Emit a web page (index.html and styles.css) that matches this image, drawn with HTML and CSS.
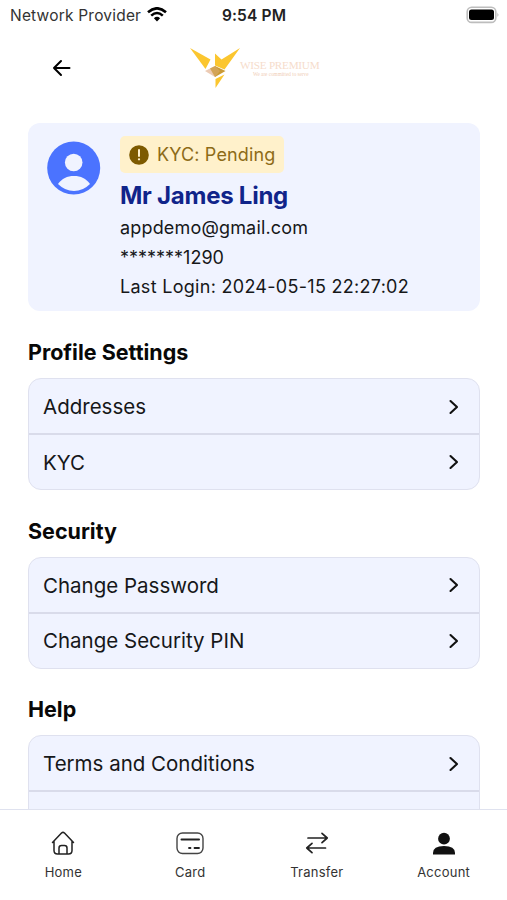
FILE: index.html
```html
<!DOCTYPE html>
<html lang="en">
<head>
<meta charset="utf-8">
<title>Account</title>
<link rel="stylesheet" href="styles.css">
</head>
<body>
<div class="status">
  <div class="carrier"><span class="carrier-name">Network Provider</span>
    <svg width="20" height="15" viewBox="0 0 20 15" fill="none" stroke="#000" stroke-width="2.600"><path d="M1 5.200Q10-2.600 19 5.200M4.200 8.600Q10 3.400 15.800 8.600"/><path d="M6.900 11.200Q10 8.400 13.100 11.200L10 14.400z" fill="#000" stroke="none"/></svg>
  </div>
  <span class="clock">9:54 PM</span>
  <svg class="battery" width="34" height="18" viewBox="0 0 34 18"><rect x="1.200" y="1.200" width="28.600" height="15.200" rx="4.500" fill="#fff" stroke="#bdbdbd" stroke-width="1.600"/><rect x="3" y="3.600" width="25" height="10.400" rx="2.500"/><path d="M31.500 6.600q1.800 2.200 0 4.400z" fill="#aaa"/></svg>
</div>
<header class="header">
  <svg class="back" width="20" height="18" viewBox="0 0 20 18" fill="none" stroke="#000" stroke-width="2" stroke-linecap="round" stroke-linejoin="round"><path d="M17.500 9H2M9 2 2 9l7 7"/></svg>
  <div class="logo">
    <svg width="52" height="42" viewBox="0 0 52 42"><path d="M0 1 20.500 12.500 15.500 22z" fill="#fbc62f"/><path d="M50 1 34.500 22.500 25 18.500V6.500l6.500 6z" fill="#fbc62f"/><path d="M25.500 32 34.500 27.500 25.500 41z" fill="#fbc62f"/><path d="M15 24 25 19 25 30z" fill="#eccbb4"/><path d="M25 19 35.500 24 25 30z" fill="#c99a36"/><path d="M20 21.500 25 19l5 5-5 6z" fill="#d3a457"/></svg>
    <div class="brand"><span class="brand-name">WISE PREMIUM</span><span class="brand-tag">We are committed to serve</span></div>
  </div>
</header>
<main class="main">
  <section class="profile">
    <svg class="avatar" width="54" height="54" viewBox="0 0 54 54"><circle cx="26.700" cy="27" r="26.500" fill="#4b73ff"/><circle cx="26.700" cy="21.500" r="8.800" fill="#f0f3ff"/><path d="M11 43C15 37.500 20 35 27 35s12 2.500 16 8q-7 7-16 7t-16-7z" fill="#f0f3ff"/></svg>
    <div class="details">
      <div class="badge"><svg width="20" height="20" viewBox="0 0 20 20"><circle cx="10" cy="10" r="9.800" fill="#7d5a00"/><path d="M10 5v6" stroke="#fff1cb" stroke-width="2" stroke-linecap="round"/><circle cx="10" cy="14.300" r="1.150" fill="#fff1cb"/></svg><span class="badge-text">KYC: Pending</span></div>
      <div class="name">Mr James Ling</div>
      <div class="line email">appdemo@gmail.com</div>
      <div class="line">*******1290</div>
      <div class="line login">Last Login: 2024-05-15 22:27:02</div>
    </div>
  </section>
  <section class="group">
    <h2>Profile Settings</h2>
    <div class="list">
      <div class="row"><span>Addresses</span><svg class="chev" viewBox="0 0 10 16"><path d="M1.500 2 8 8l-6.500 6"/></svg></div>
      <div class="row"><span>KYC</span><svg class="chev" viewBox="0 0 10 16"><path d="M1.500 2 8 8l-6.500 6"/></svg></div>
    </div>
  </section>
  <section class="group">
    <h2>Security</h2>
    <div class="list">
      <div class="row"><span>Change Password</span><svg class="chev" viewBox="0 0 10 16"><path d="M1.500 2 8 8l-6.500 6"/></svg></div>
      <div class="row"><span>Change Security PIN</span><svg class="chev" viewBox="0 0 10 16"><path d="M1.500 2 8 8l-6.500 6"/></svg></div>
    </div>
  </section>
  <section class="group">
    <h2>Help</h2>
    <div class="list">
      <div class="row"><span>Terms and Conditions</span><svg class="chev" viewBox="0 0 10 16"><path d="M1.500 2 8 8l-6.500 6"/></svg></div>
      <div class="row"></div>
    </div>
  </section>
</main>
<nav class="tabs">
  <div class="tab"><svg width="28" height="26" viewBox="0 0 28 26" fill="none" stroke="#222" stroke-width="1.500" stroke-linecap="round" stroke-linejoin="round"><path d="M3.500 12.500 12.500 3q1.500-1.300 3 0l9 9.500M5 11v9.500Q5 24 8.500 24h11q3.500 0 3.500-3.500V11M10 24v-6q0-2.500 2.500-2.500h3q2.500 0 2.500 2.500v6"/></svg><span>Home</span></div>
  <div class="tab"><svg width="28" height="26" viewBox="0 0 28 26" fill="none" stroke="#222" stroke-width="1.400" stroke-linecap="round"><rect x="1" y="3" width="26" height="20.500" rx="5.500" stroke="#444"/><path d="M5.500 9.500h17.500" stroke-width="2"/><path d="M13 18h1.500M18.500 18h4.500" stroke-width="1.800"/></svg><span>Card</span></div>
  <div class="tab"><svg width="28" height="26" viewBox="0 0 28 26" fill="none" stroke="#222" stroke-width="1.700" stroke-linecap="round" stroke-linejoin="round"><path d="M5 8h19M19 3.300 24.200 8 19 12.700M22.500 18H4M9 13.300 3.800 18 9 22.700"/></svg><span>Transfer</span></div>
  <div class="tab"><svg width="28" height="26" viewBox="0 0 28 26" fill="#111"><circle cx="14" cy="8.700" r="5.900"/><path d="M3 24.500V23q0-7 11-7t11 7v1.500z"/></svg><span>Account</span></div>
</nav>
</body>
</html>
```

FILE: styles.css
```css
* { box-sizing: border-box; }
body {
  margin: 0;
  width: 507px;
  height: 900px;
  overflow: hidden;
  display: flex;
  flex-direction: column;
  background: #fff;
  color: #161719;
  font-family: Inter, "Liberation Sans", sans-serif;
}
svg { display: block; flex: none; }
span, h2, .name, .line { white-space: nowrap; }
.status {
  flex: none;
  height: 29px;
  display: grid;
  grid-template-columns: 190px 1fr 190px;
  align-items: center;
  padding: 0 7px 0 10px;
}
.carrier { display: flex; align-items: center; gap: 6px; font-size: 15.5px; color: #333; letter-spacing: .2px; }
.carrier-name, .clock { padding-top: 1px; }
.clock { text-align: center; font-size: 15.5px; font-weight: 600; color: #222; letter-spacing: .15px; margin-right: 2px; }
.battery { justify-self: end; }
.header { flex: none; height: 94px; display: flex; padding: 18px 0 0 52px; }
.back { margin-top: 12px; }
.logo { display: flex; margin-left: 118px; }
.brand { padding: 12px 0 0 0; margin-left: -2px; display: flex; flex-direction: column; font-family: "Liberation Serif", serif; color: #f6dccb; }
.brand-name { font-size: 11.2px; line-height: 13px; letter-spacing: -.25px; }
.brand-tag { font-size: 5.2px; line-height: 5px; padding-left: 13px; color: #f0cdb5; }
.main { flex: 1; min-height: 0; overflow: hidden; padding: 0 27px 0 28px; }
.profile { height: 188px; border-radius: 12px; background: #f0f3ff; display: flex; padding: 13px 0 0 19px; }
.avatar { margin-top: 5px; }
.details { margin-left: 19px; }
.badge { width: 164px; height: 37px; border-radius: 5px; background: #fff1cb; color: #8d6b17; display: flex; align-items: center; gap: 8px; padding-left: 9px; font-size: 18px; letter-spacing: .15px; }
.name { height: 40px; line-height: 46px; font-size: 24px; font-weight: 700; color: #10248a; letter-spacing: -.25px; }
.line { height: 29.6px; line-height: 29.6px; font-size: 18px; }
.email { letter-spacing: .17px; }
.login { letter-spacing: .29px; }
.group { height: 178.7px; padding-top: 26px; }
h2 { margin: 0 0 11px; height: 30px; line-height: 30px; font-size: 21.5px; font-weight: 650; color: #080808; letter-spacing: 0; }
.list { height: 112px; border: 1.5px solid #dfe1ef; border-radius: 13px; background: #f0f3ff; overflow: hidden; }
.row { height: 54px; display: flex; align-items: center; justify-content: space-between; padding: 0 20px 0 14px; font-size: 20.5px; }
.row:first-child { height: 56px; border-bottom: 2px solid #d9dbea; padding-top: 1px; }
.chev { width: 10px; height: 16px; fill: none; stroke: #111; stroke-width: 2.1; stroke-linecap: round; stroke-linejoin: round; }
.tabs { flex: none; height: 91px; border-top: 1.5px solid #dfe2ef; background: #fff; display: grid; grid-template-columns: repeat(4, 1fr); }
.tab { display: flex; flex-direction: column; align-items: center; padding: 20px 0 0; font-size: 13px; line-height: 18px; gap: 7px; color: #333; letter-spacing: .25px; }
```
